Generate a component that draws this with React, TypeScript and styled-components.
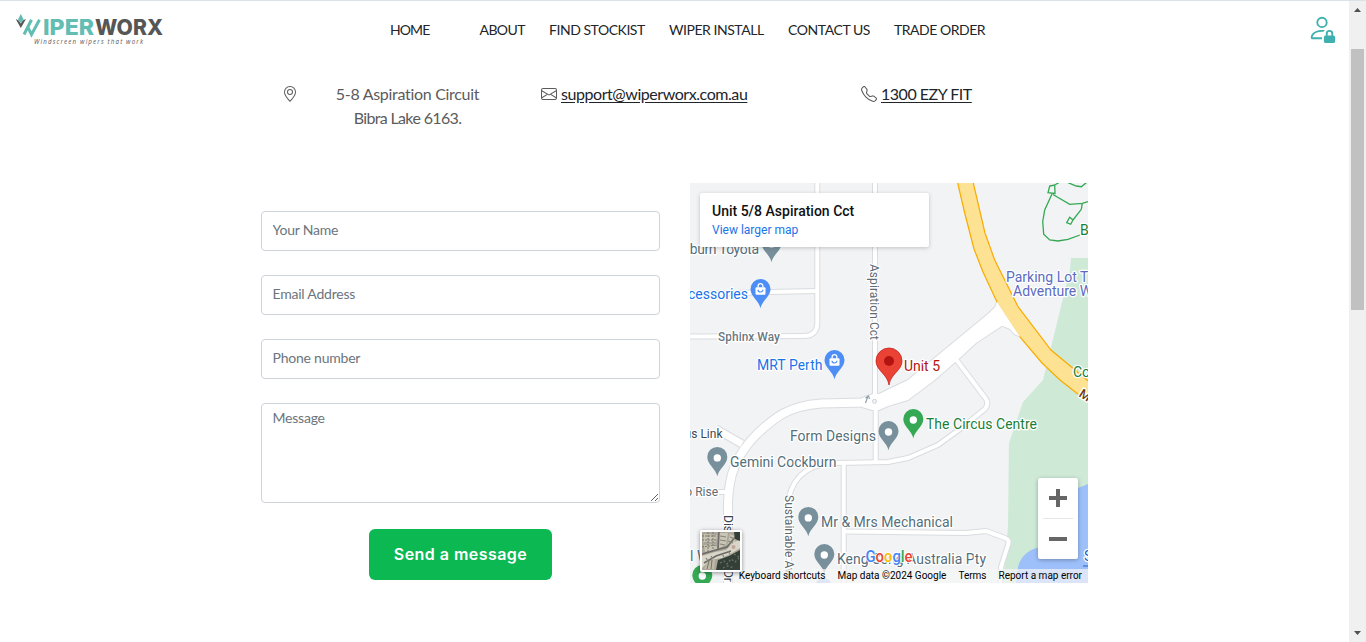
import React from 'react';
import styled, { createGlobalStyle } from 'styled-components';
import { BsEnvelope, BsGeoAlt, BsPersonLock, BsTelephone } from 'react-icons/bs';

const GlobalStyle = createGlobalStyle`
  * { box-sizing: border-box; }
  html, body { margin: 0; overflow: hidden; background: #fff; }
  body { font-family: Lato, "Open Sans", sans-serif; color: #212529; }
`;

const Screen = styled.div`
  display: flex;
  width: 1366px;
  height: 642px;
  border-top: 1px solid #d9e3e6;
`;

const Page = styled.div`
  flex: 1;
  display: flex;
  flex-direction: column;
`;

const Header = styled.header`
  display: flex;
  align-items: flex-start;
  height: 60px;
  padding-left: 14px;
`;

const Logo = styled.svg`
  width: 152px;
  height: 38px;
  margin-top: 10px;
`;

const Nav = styled.nav`
  display: flex;
  margin: 18px 0 0 224px;
  width: 917px;
`;

const NavLink = styled.a<{ $slot: number; $track: number }>`
  width: ${(p) => p.$slot}px;
  font-size: 14px;
  line-height: 21px;
  letter-spacing: ${(p) => p.$track}px;
  white-space: nowrap;
`;

const Account = styled.a`
  margin-top: 12px;
  line-height: 0;
  color: #3eb0ae;
`;

const ContactRow = styled.section`
  display: flex;
  height: 122px;
  padding: 21px 0 0 281.5px;
  font-size: 16px;
  line-height: 24px;
  color: #5b5b5b;
`;

const ContactItem = styled.div<{ $slot: number; $gap: number }>`
  display: flex;
  width: ${(p) => p.$slot}px;
  gap: ${(p) => p.$gap}px;
  white-space: nowrap;
  svg { flex: none; margin-top: 4px; }
`;

const Address = styled.address`
  width: 145px;
  font-style: normal;
  text-align: center;
`;

const AddressLine = styled.div<{ $track: number }>`
  letter-spacing: ${(p) => p.$track}px;
`;

const ContactLink = styled.a<{ $track: number }>`
  color: #212529;
  text-decoration: underline;
  text-underline-offset: 2px;
  letter-spacing: ${(p) => p.$track}px;
`;

const Columns = styled.main`
  display: flex;
  gap: 30px;
  padding-left: 261px;
`;

const Form = styled.form`
  display: flex;
  flex-direction: column;
  gap: 24px;
  width: 399px;
  padding-top: 28px;
`;

const fieldStyle = `
  display: block;
  width: 100%;
  margin: 0;
  border: 1px solid #ced4da;
  border-radius: 4px;
  background: #fff;
  font-family: Lato, "Open Sans", sans-serif;
  font-size: 14px;
  line-height: 21px;
  letter-spacing: -0.22px;
  outline: none;
  &::placeholder { color: #6c757d; opacity: 1; }
`;

const Field = styled.input`
  ${fieldStyle}
  height: 40px;
  padding: 5px 10.5px 9px;
`;

const MessageField = styled.textarea`
  ${fieldStyle}
  height: 100px;
  padding: 3px 10.5px;
`;

const SendButton = styled.button`
  align-self: center;
  width: 183px;
  height: 51px;
  margin-top: 2px;
  padding: 0 0 2px;
  border: 0;
  border-radius: 6px;
  background: #0bb852;
  color: #fff;
  font: 600 16px Inter, sans-serif;
  letter-spacing: 0.45px;
  white-space: nowrap;
`;

const MapFrame = styled.section`
  position: relative;
  width: 398px;
  height: 400px;
  overflow: hidden;
  font-family: Roboto, sans-serif;
`;

const MapCanvas = styled.svg`
  display: block;
  width: 398px;
  height: 400px;
`;

const PlaceCard = styled.div`
  position: absolute;
  left: 10px;
  top: 10px;
  width: 229px;
  height: 54px;
  padding: 9px 12px;
  border-radius: 2px;
  background: #fff;
  box-shadow: 0 1px 4px rgba(0, 0, 0, 0.2);
  white-space: nowrap;
`;

const PlaceName = styled.div`
  font-size: 14px;
  font-weight: 500;
  line-height: 18px;
  color: #111;
`;

const PlaceLink = styled.a`
  display: block;
  font-size: 12px;
  line-height: 20px;
  color: #1a73e8;
`;

const ZoomControl = styled.div`
  position: absolute;
  left: 348px;
  top: 295px;
  width: 40px;
  height: 81px;
  padding: 0 5px;
  border-radius: 2px;
  background: #fff;
  box-shadow: 0 1px 4px rgba(0, 0, 0, 0.3);
`;

const ZoomKey = styled.div`
  display: flex;
  align-items: center;
  justify-content: center;
  height: 40px;
  & + & { height: 41px; border-top: 1px solid #e6e6e6; }
`;

const Thumbnail = styled.svg`
  position: absolute;
  left: 10px;
  top: 347px;
  width: 42px;
  height: 42px;
  border: 2px solid #fff;
  border-radius: 2px;
  box-shadow: 0 1px 4px rgba(0, 0, 0, 0.4);
`;

const Attribution = styled.div`
  position: absolute;
  right: 0;
  bottom: 0;
  display: flex;
  gap: 12px;
  height: 14px;
  padding: 0 6px;
  background: rgba(245, 245, 245, 0.7);
  font-size: 10px;
  line-height: 14px;
  color: #000;
  white-space: nowrap;
`;

const Scrollbar = styled.aside`
  display: flex;
  flex-direction: column;
  align-items: center;
  justify-content: space-between;
  width: 17px;
  height: 641px;
  padding: 7px 0;
  background: #f0f0f0;
`;

const Thumb = styled.div`
  width: 13px;
  height: 261px;
  margin: 0 0 auto;
  background: #c1c1c1;
`;

const Arrow = styled.svg<{ $gap?: number }>`
  width: 7px;
  height: 4px;
  margin-bottom: ${(p) => p.$gap ?? 0}px;
  fill: #505050;
`;

type Point = { x: number; y: number };

const PIN = 'M0 19.3C-1.2 12-10 7.5-10 0A10 10 0 1 1 10 0C10 7.5 1.2 12 0 19.3Z';

const Pin = ({ x, y, color, shop }: Point & { color: string; shop?: boolean }) => (
  <g transform={`translate(${x} ${y})`}>
    <path d={PIN} fill={color} />
    {shop ? (
      <g>
        <path d="M-2.400-1.500V-3a2.400 2.400 0 0 1 4.800 0v1.500" fill="none" stroke="#fff" strokeWidth="1.3" />
        <rect x="-5" y="-1.800" width="10" height="7.600" rx="1" fill="#fff" />
        <path d="M-2.500 0.800a2.500 2.200 0 0 0 5 0" fill="none" stroke={color} strokeWidth="1.2" />
      </g>
    ) : (
      <circle cy="1" r="3.7" fill="#fff" />
    )}
  </g>
);

const MapLabel = styled.text<{ $size?: number; $weight?: number }>`
  font-family: Roboto, sans-serif;
  font-size: ${(p) => p.$size ?? 14}px;
  font-weight: ${(p) => p.$weight ?? 400};
  paint-order: stroke;
  stroke: #fff;
  stroke-width: 2.5px;
  stroke-linejoin: round;
`;

const Wordmark = styled.text`
  font-family: Roboto, sans-serif;
  font-size: 16.5px;
  font-weight: 500;
`;

const Roads = styled.g`
  fill: none;
  stroke-linejoin: round;
`;

const minorRoads = [
  'M817.3 180V322Q817.3 336 804 336L685 336.5',
  'M685 294L770 292L817 291',
  'M875 180V400',
  'M875.7 400V462',
  'M956.5 360L971 379L986 399Q989 404 985 409L960 429L938 445L908 458L888 462L837 463Q818 463 806 471Q793 480 789 497V590',
  'M843.7 463V590',
  'M844 531.5L888 532L966 533L986 531L1005 538Q1010 540 1008 545L1001 567L1000 590',
  'M710 492H728',
];

const bend = 'M866 402.5L821 403.5C788 406 774 418 757 434C735 456 729 476 728 502V590';
const link = 'M716 429L742 444';
const avenue =
  'M862 398L873 394L879 394L908 380L988 314L995.3 307L997 302L1020 336.5L1014 334L1010 329L1002 325.7L976 343L958.7 359L934.7 380L908 400L888 406L879 410H872L862 407Z';
const highway =
  'M957.7 183L964.7 213L974 249L983 272L997 302L1019.7 336.7L1042 363L1060 380L1088 402V381L1084.7 378L1051 350L1018 306.7L994.7 260L985 233L973.3 183Z';

const slate = '#78909c';
const slateText = '#546e7a';

const LocationMap = () => (
  <MapFrame>
    <MapCanvas viewBox="690 183 398 400">
      <rect x="690" y="183" width="398" height="400" fill="#f1f3f4" />
      <path d="M1071 258H1088V583H1003L1008 527L1009 443L1023 402L1043 380L1051 347L1070 270Z" fill="#ceead6" />
      <path d="M1016 583L1018 567Q1022 551 1040 547L1060 510L1078 488L1088 484V583Z" fill="#9dc0fb" />
      <Roads stroke="#dadce0" strokeWidth="6">
        {minorRoads.map((d) => <path key={d} d={d} />)}
        <path d={link} strokeWidth="9" />
        <path d={bend} strokeWidth="10" />
        <path d={avenue} strokeWidth="2" />
      </Roads>
      <Roads stroke="#fff" strokeWidth="4">
        {minorRoads.map((d) => <path key={d} d={d} />)}
        <path d={link} strokeWidth="7" />
        <path d={bend} strokeWidth="8" />
      </Roads>
      <path d={avenue} fill="#fff" />
      <circle cx="874.5" cy="401.3" r="2" fill="#f1f3f4" stroke="#cfd2d6" />
      <path d="M865.5 403L868 396M865.5 398L868.5 396L869.5 399" fill="none" stroke="#90a0ac" strokeWidth="1.2" />
      <path d={highway} fill="#fde293" />
      <path
        d="M957.7 183L964.7 213L974 249L983 272L997 302M1019.7 336.7L1042 363L1060 380L1088 402M973.3 183L985 233L994.7 260L1018 306.7L1051 350L1084.7 378L1088 381"
        fill="none" stroke="#f9ab00" strokeWidth="1.2"
      />
      <path
        d="M1049.7 186L1054.7 185L1055 193.5L1048 192.7ZM1054.7 185L1060 182M1053 194.5L1069.7 204.3L1082.3 203.3L1088 201.5M1052 194L1044.7 210L1042.7 221.7L1043.7 234.3L1049.7 240L1058 241L1068 239.3L1080 235M1082.3 203.3L1081.3 209.3L1073 220M1069.7 217.3L1073 220L1070.7 224.3L1066.7 222.7ZM1068 182.7L1076.3 186L1081.3 186.7L1086.3 182.7"
        fill="none" stroke="#34a853" strokeWidth="1.3"
      />

      <MapLabel x="660" y="253.500" fill={slateText} textLength="99">Cockburn Toyota</MapLabel>
      <Pin x={771.5} y={242.9} color={slate} />
      <MapLabel x="748" y="299" textAnchor="end" fill="#1a73e8">Accessories</MapLabel>
      <Pin x={760.5} y={289} color="#4c8df6" shop />
      <MapLabel x="718" y="341" $size={12} $weight={500} fill="#6b7880" textLength="62">Sphinx Way</MapLabel>
      <MapLabel x="757" y="370" fill="#1a73e8" textLength="65.5">MRT Perth</MapLabel>
      <Pin x={834.5} y={360} color="#4c8df6" shop />
      <MapLabel transform="translate(870 264) rotate(90)" $size={12} fill="#5f6a72" textLength="76">Aspiration Cct</MapLabel>
      <MapLabel x="1006" y="282" fill="#5c6bc0">Parking Lot The</MapLabel>
      <MapLabel x="1013" y="296" fill="#5c6bc0">Adventure World</MapLabel>
      <MapLabel x="1080" y="235" fill="#188038">Bibra</MapLabel>
      <MapLabel x="1073" y="377" fill="#188038">Cockburn</MapLabel>
      <MapLabel transform="translate(1078 396) rotate(32)" $size={13} $weight={500} fill="#6b3b12">M</MapLabel>
      <MapLabel x="722.500" y="437.500" textAnchor="end" $size={12} fill="#3c4650">Miguous Link</MapLabel>
      <MapLabel x="718" y="496" textAnchor="end" $size={12} fill="#5f6a72">Barbado Rise</MapLabel>
      <Pin x={717.3} y={456.9} color={slate} />
      <MapLabel x="730" y="467" fill={slateText} textLength="106.5">Gemini Cockburn</MapLabel>
      <MapLabel x="790" y="441" fill={slateText} textLength="86">Form Designs</MapLabel>
      <Pin x={888.5} y={431} color={slate} />
      <Pin x={913.3} y={419} color="#34a853" />
      <MapLabel x="926" y="429" fill="#188038" textLength="111">The Circus Centre</MapLabel>
      <MapLabel transform="translate(784.5 495) rotate(90)" $size={12} fill="#5f6a72">Sustainable Ave</MapLabel>
      <MapLabel transform="translate(724 515) rotate(90)" $size={12} fill="#3c4650">Discovery Dr</MapLabel>
      <MapLabel x="690" y="561" fill={slateText}>l Works</MapLabel>
      <Pin x={702.3} y={575} color="#34a853" />
      <Pin x={808.3} y={516.9} color={slate} />
      <MapLabel x="821" y="527" fill={slateText} textLength="132">Mr &amp; Mrs Mechanical</MapLabel>
      <circle cx="823.5" cy="586" r="8" fill="#a9c4f9" />
      <Pin x={824.3} y={554} color={slate} />
      <MapLabel x="837" y="564" fill={slateText} textLength="149">Keng Seng Australia Pty</MapLabel>
      <MapLabel x="1084" y="561" fill="#1a5fd0" stroke="none">South</MapLabel>
      <path d="M1083 566H1088" stroke="#1a5fd0" />

      <path d="M889 385C887.5 374 876 370.5 876 361A13 13 0 1 1 902 361C902 370.5 890.500 374 889 385Z" fill="#ea4335" stroke="#c5221f" strokeWidth="0.8" />
      <circle cx="889" cy="361" r="5" fill="#b31412" />
      <MapLabel x="904" y="371" fill="#b31412" textLength="36">Unit 5</MapLabel>

      <Wordmark x="865.500" y="561.500" textLength="47" lengthAdjust="spacingAndGlyphs" stroke="#fff" strokeWidth="1.6" paintOrder="stroke">
        <tspan fill="#4285f4">G</tspan><tspan fill="#ea4335">o</tspan><tspan fill="#fbbc04">o</tspan><tspan fill="#4285f4">g</tspan><tspan fill="#34a853">l</tspan><tspan fill="#ea4335">e</tspan>
      </Wordmark>
    </MapCanvas>

    <PlaceCard>
      <PlaceName>Unit 5/8 Aspiration Cct</PlaceName>
      <PlaceLink>View larger map</PlaceLink>
    </PlaceCard>

    <Attribution>
      <span>Keyboard shortcuts</span>
      <span>Map data ©2024 Google</span>
      <span>Terms</span>
      <span>Report a map error</span>
    </Attribution>

    <Thumbnail viewBox="0 0 38 38">
      <rect width="38" height="38" fill="#aaa598" />
      <path d="M2 2l13 1-1 7-13 0zM17 1h9l-2 12-7 3zM28 2l7 3-4 8-6 1zM2 13l12-1 1 5-12 3z" fill="#c9c5b5" />
      <path d="M0 8H15M0 4H14M6 0V20M11 0V17M0 15L15 13" stroke="#77766a" strokeWidth="1" strokeDasharray="2 1" />
      <path d="M0 24L13 20L24 18L32 10L38 8V16L30 21L20 26L8 28L0 36Z" fill="#d8d6c8" />
      <path d="M0 22L14 18L25 15L34 4M17 0L16 18M2 31L14 24L29 19" fill="none" stroke="#6d6b68" strokeWidth="1.6" />
      <path d="M18 4l6 1M18 8l6 1M18 12l5 1M28 5l5 2M26 9l5 2M4 26l2 3M9 24l2 3M20 22l2 3M26 19l2 3" stroke="#86847a" strokeWidth="1.2" />
      <path d="M32 0H38V9L33 7ZM16 28L27 24L38 18V38H14Z" fill="#343f38" />
      <path d="M18 31l4-2 3 3 4-5 4 3 4-4M21 36l5-2 6 2M32 22l5 3" fill="none" stroke="#68716a" strokeWidth="1.3" strokeDasharray="2 2" />
      <path d="M5 30L13 27L12 37H2Z" fill="#bebaa8" />
      <path d="M7 29l-2 8M10 28l-1 9" stroke="#767365" />
      <circle cx="31.500" cy="15" r="2" fill="#c4a39a" />
    </Thumbnail>

    <ZoomControl>
      <ZoomKey>
        <svg width="18" height="18" fill="#666"><path d="M7 0h4v7h7v4h-7v7H7v-7H0V7h7z" /></svg>
      </ZoomKey>
      <ZoomKey>
        <svg width="18" height="4" fill="#666"><path d="M0 0h18v4H0z" /></svg>
      </ZoomKey>
    </ZoomControl>
  </MapFrame>
);

const WiperLogo = () => (
  <Logo viewBox="14 11 152 38">
    <path d="M15.700 19L20.800 28L26 19L22.800 20.500L20.800 23.500L18.700 20.500Z" fill="#565656" />
    <path d="M20.800 14L23.700 19.500L20.800 23L18 19.500Z" fill="#62bdb3" />
    <path d="M24 34.500L31.500 19.800M28 27.500L31.500 34.500L39.500 19.800" fill="none" stroke="#62bdb3" strokeWidth="3" />
    <text x="43" y="35" fontFamily="Inter, sans-serif" fontWeight="800" fontSize="21.500" fill="#62bdb3" textLength="51" lengthAdjust="spacingAndGlyphs">IPER</text>
    <text x="95" y="35" fontFamily="Inter, sans-serif" fontWeight="800" fontSize="21.500" fill="#565656" textLength="68" lengthAdjust="spacingAndGlyphs">WORX</text>
    <text x="34" y="43.700" fontFamily="Open Sans, sans-serif" fontWeight="500" fontStyle="italic" fontSize="6.200" fill="#565656" textLength="109">Windscreen wipers that work</text>
  </Logo>
);

export default function App() {
  return (
    <Screen>
      <GlobalStyle />
      <Page>
        <Header>
          <WiperLogo />
          <Nav>
            <NavLink $slot={89.500} $track={-0.9}>HOME</NavLink>
            <NavLink $slot={69.500} $track={-0.6}>ABOUT</NavLink>
            <NavLink $slot={120} $track={-0.46}>FIND STOCKIST</NavLink>
            <NavLink $slot={119} $track={-0.46}>WIPER INSTALL</NavLink>
            <NavLink $slot={106} $track={-0.42}>CONTACT US</NavLink>
            <NavLink $slot={95} $track={-0.48}>TRADE ORDER</NavLink>
          </Nav>
          <Account><BsPersonLock size={30} /></Account>
        </Header>
        <ContactRow>
          <ContactItem $slot={259.500} $gap={37.500}>
            <BsGeoAlt size={16} />
            <Address>
              <AddressLine $track={-0.3}>5-8 Aspiration Circuit</AddressLine>
              <AddressLine $track={-0.65}>Bibra Lake 6163.</AddressLine>
            </Address>
          </ContactItem>
          <ContactItem $slot={320} $gap={4}>
            <BsEnvelope size={16} />
            <ContactLink $track={-0.44}>support@wiperworx.com.au</ContactLink>
          </ContactItem>
          <ContactItem $slot={120} $gap={4}>
            <BsTelephone size={16} />
            <ContactLink $track={-0.48}>1300 EZY FIT</ContactLink>
          </ContactItem>
        </ContactRow>
        <Columns>
          <Form>
            <Field placeholder="Your Name" />
            <Field placeholder="Email Address" />
            <Field placeholder="Phone number" />
            <MessageField placeholder="Message" />
            <SendButton type="button">Send a message</SendButton>
          </Form>
          <LocationMap />
        </Columns>
      </Page>
      <Scrollbar>
        <Arrow $gap={37} viewBox="0 0 7 4"><path d="M3.500 0L7 4H0z" /></Arrow>
        <Thumb />
        <Arrow viewBox="0 0 7 4"><path d="M3.500 4L0 0H7z" /></Arrow>
      </Scrollbar>
    </Screen>
  );
}
